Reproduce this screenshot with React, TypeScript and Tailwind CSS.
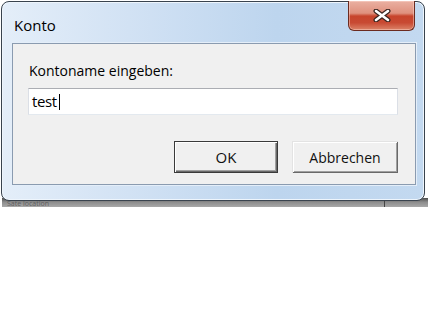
export default function App() {
  return (
    <div className="relative w-[430px] h-[323px] overflow-hidden bg-white font-['Open_Sans','Liberation_Sans',sans-serif]">
      <div className="pl-[1px] pt-[1px]">
        {/* window frame */}
        <div className="relative z-10 flex h-[200px] w-[424px] flex-col rounded-[8px] border border-[#39434e] bg-[linear-gradient(90deg,#e4eef9_0%,#d2e2f4_30%,#bdd5ee_65%,#c3d9f0_100%)] shadow-[inset_0_0_0_1px_#eef5fc]">
          {/* title bar */}
          <div className="flex h-[41px] items-start justify-between">
            <div className="pl-[12px] pt-[14px] text-[15px] leading-[18px] text-black">Konto</div>
            <div className="-mt-[1px] mr-[9px] flex h-[30px] w-[67px] items-center justify-center rounded-b-[6px] border border-t-0 border-[#6b2b20] bg-[linear-gradient(180deg,#eab0a2_0%,#df917e_42%,#c7442c_52%,#c84a33_75%,#dc8469_100%)] shadow-[inset_0_0_0_1px_rgba(255,220,210,0.45)]">
              <svg width="18" height="13" viewBox="0 0 18 13">
                <path d="M3 2 L15 11 M15 2 L3 11" stroke="#3a2520" strokeWidth="5" strokeLinecap="round" />
                <path d="M3 2 L15 11 M15 2 L3 11" stroke="#ffffff" strokeWidth="2.6" strokeLinecap="round" />
              </svg>
            </div>
          </div>

          {/* client area */}
          <div className="ml-[10px] h-[142px] w-[404px] border border-[#8a9bb0] bg-[#f0f0f0] px-[15px] pt-[18px] shadow-[0_0_0_1px_#e4eef9]">
            <div className="pl-[1px] text-[14px] leading-[18px] text-black">Kontoname eingeben:</div>
            <div className="mt-[8px] flex h-[27px] w-[370px] items-center border border-t-[#abadb3] border-x-[#dbdfe6] border-b-[#e3e9ef] bg-white pl-[3px] text-[15px] text-black">
              <span className="tracking-[-0.4px]">test</span>
              <span className="ml-[2px] h-[16px] w-[1.5px] bg-black" />
            </div>
            <div className="mt-[26px] flex w-[370px] justify-end gap-[14px]">
              <button className="flex h-[32px] w-[104px] items-center justify-center border border-[#3a3a3a] bg-[#f0f0f0] text-[15px] text-[#111] shadow-[inset_1px_1px_0_#fff,inset_-1px_-1px_0_#696969,inset_-2px_-2px_0_#a0a0a0]">
                OK
              </button>
              <button className="flex h-[32px] w-[106px] items-center justify-center bg-[#f0f0f0] text-[14px] text-[#111] shadow-[inset_1px_1px_0_#e3e3e3,inset_-1px_-1px_0_#696969,inset_2px_2px_0_#fff,inset_-2px_-2px_0_#a0a0a0]">
                Abbrechen
              </button>
            </div>
          </div>
        </div>

        {/* window behind, peeking out below */}
        <div className="relative -mt-[3px] ml-[1px] flex h-[9px] w-[426px] overflow-hidden bg-[linear-gradient(180deg,#4d4d4d_0%,#8c8c8c_45%,#a8a8a8_100%)]">
          <span className="pl-[5px] pt-[2px] text-[7px] leading-[7px] text-[#5f5f5f]">Sate location</span>
          <span className="absolute left-[382px] top-[2px] h-[7px] w-[1px] bg-[#444]" />
        </div>
      </div>
    </div>
  );
}
